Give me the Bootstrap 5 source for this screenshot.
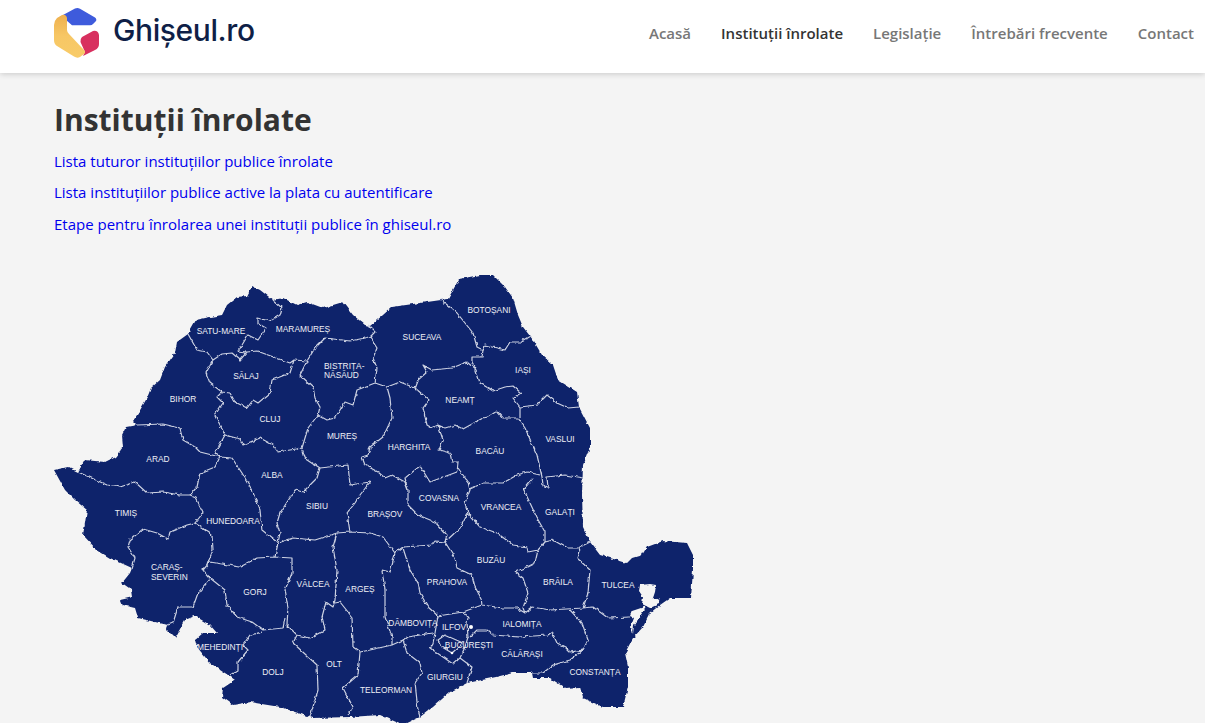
<!DOCTYPE html>
<html lang="ro">
<head>
<meta charset="utf-8">
<title>Ghișeul.ro</title>
<link href="https://cdn.jsdelivr.net/npm/bootstrap@5.3.0/dist/css/bootstrap.min.css" rel="stylesheet">
<style>
html,body{height:723px;overflow:hidden}
body{background:#f4f4f4;font-family:"Open Sans",sans-serif;color:#333}
.top-bar{height:73px;padding:0 11px 0 54px;background:#fff;box-shadow:0 1px 6px rgba(0,0,0,.18);align-items:flex-start}
.brand-box{gap:14px;padding:0;margin:8px 0 0;color:#0f1f47;text-decoration:none}
.brand-text{font-family:Inter,sans-serif;font-weight:500;font-size:30px;line-height:44px;letter-spacing:-.4px;color:#0f1f47;margin-bottom:6px}
.menu-list{gap:30px;margin-top:23px}
.top-bar .menu-list .nav-link{padding:0;font-size:15px;line-height:20px;font-weight:600;color:#777}
.top-bar .menu-list .nav-link.active{color:#333}
.page-body{padding:29px 54px 0}
.page-title{font-size:30px;font-weight:700;line-height:36px;margin:0 0 12.7px;color:#333}
.doc-link{display:block;font-size:15px;line-height:21px;margin-bottom:10.5px;color:#0000ee;text-decoration:none}
.map-wrap{display:block;margin-top:40.300px}
.map-label{font-family:"Liberation Sans",sans-serif;font-size:8.4px;fill:#eef0f6;text-anchor:middle}
.map-label.start{text-anchor:start}
</style>
</head>
<body>
<nav class="navbar navbar-expand top-bar">
  <a class="navbar-brand d-flex align-items-center brand-box" href="#">
    <svg width="45" height="50" viewBox="54 8 45 50" aria-hidden="true">
      <defs><linearGradient id="goldFill" x1="0" y1="0" x2="0" y2="1"><stop offset="0" stop-color="#eeb04e"/><stop offset=".5" stop-color="#f7c765"/><stop offset="1" stop-color="#f8cb68"/></linearGradient></defs>
      <path d="M82 37 93 31Q98 30 99 35V44Q99 48 95 50L83 56 85 52 80.500 42Q80 39 82 37Z" fill="#d8305f"/>
      <path d="M63 15 75 8.500Q77.500 7.500 80 8.700L95 17.500Q97 19 96 21L93 24Q92 25.300 90 25.300H72L66 20Z" fill="#3e5bdc"/>
      <path d="M54 25Q54 21 57 18L62 15Q66 14 67 18V30Q67 32 69 34L84 50Q86 52 84 54L80 57Q77 58.500 74 56.500L57 46Q54 44 54 40Z" fill="url(#goldFill)"/>
    </svg>
    <span class="brand-text">Ghișeul.ro</span>
  </a>
  <ul class="navbar-nav ms-auto menu-list">
    <li class="nav-item"><a class="nav-link" href="#">Acasă</a></li>
    <li class="nav-item"><a class="nav-link active" href="#">Instituții înrolate</a></li>
    <li class="nav-item"><a class="nav-link" href="#">Legislație</a></li>
    <li class="nav-item"><a class="nav-link" href="#">Întrebări frecvente</a></li>
    <li class="nav-item"><a class="nav-link" href="#">Contact</a></li>
  </ul>
</nav>
<main class="page-body">
  <h1 class="page-title">Instituții înrolate</h1>
  <a class="doc-link" href="#">Lista tuturor instituţiilor publice înrolate</a>
  <a class="doc-link" href="#">Lista instituţiilor publice active la plata cu autentificare</a>
  <a class="doc-link" href="#">Etape pentru înrolarea unei instituții publice în ghiseul.ro</a>
  <svg class="map-wrap" width="640" height="448" viewBox="54 275 640 448" role="img" aria-label="Harta României">
    <defs>
      <filter id="rough" filterUnits="userSpaceOnUse" x="40" y="260" width="670" height="480" color-interpolation-filters="sRGB">
        <feTurbulence type="fractalNoise" baseFrequency="0.2" numOctaves="2" seed="4"/>
        <feDisplacementMap in="SourceGraphic" scale="3.5" xChannelSelector="R" yChannelSelector="G"/>
        <feGaussianBlur stdDeviation="0.3"/>
      </filter>
    </defs>
    <g filter="url(#rough)">
      <path fill="#0e236b" d="M54 470 68 467 78 472 85 460 105 462 115 457 123 447 122 435 126 427 137 425 133 421 139 412 147 398 151 388 160 380 165 367 175 353 177 342 188 334 196 320 210 317 222 315 227 305 237 297 247 296 252 286 260 290 273 300 283 298 297 305 307 302 323 308 343 302 353 315 365 325 370 326 383 315 392 307 427 302 448 299 453 290 459 279 480 275 493 275 505 287 513 298 518 315 523 327 533 340 542 355 553 365 558 380 577 392 579 407 590 428 590 447 583 465 582 495 583 527 590 542 600 555 627 563 632 558 642 555 647 547 663 541 687 543 693 555 693 570 691 598 670 598 660 605 650 613 643 627 633 638 625 653 628 667 628 687 623 707 603 707 583 698 580 687 565 688 550 678 533 678 532 673 513 673 497 677 467 683 450 692 433 707 420 717 403 725 387 718 380 715 350 717 313 718 280 707 250 702 233 705 222 697 223 688 235 680 228 675 210 663 197 647 195 640 203 633 217 633 210 625 195 616 185 620 175 638 167 630 168 625 138 618 135 608 122 605 120 600 133 597 132 590 122 583 130 573 132 568 110 558 97 550 83 535 85 523 87 510 75 500 65 490Z"/>
      <path fill="#f4f4f4" d="M640 585 650 584 656 585 655 592 653 598 660 600 659 604 650 608 642 604 643 597 639 591ZM632 611 647 606 640 616 634 625 633 634 631 626 634 618 630 616Z"/>
      <path fill="none" stroke="#ccd1e2" stroke-width="1.200" stroke-linejoin="round" d="M273 300 282 308 280 315 270 321 257 318 257 323 266 328 258 340 248 335 242 345 238 351 247 352 257 351 290 363 294 360 307 361
      M188 334 197 350 207 352 213 360 222 354 232 353 240 360 247 352
      M213 360 206 373 210 383 222 392 230 393 235 402 247 408 253 400 258 403 270 393 272 380 290 373 294 360
      M222 392 217 397 223 403 215 415 225 435 240 439 243 445 260 438 273 445 278 452 302 448
      M225 435 215 453 220 457
      M137 425 163 424 180 428 183 440 195 447 200 452 220 457 215 467 200 473 197 487 190 495
      M78 472 107 485 120 487 135 482 147 493 163 492 180 495 190 495 195 497 203 513 195 523
      M220 457 232 458 242 473 252 490 260 510 262 530 278 543
      M302 448 305 458 320 468 317 478 303 492 295 490 280 513 277 523 280 533 278 543
      M318 415 308 428 302 448
      M307 361 300 375 313 387 315 398 320 407 318 415 327 420 335 418 345 402 353 405 357 390 375 383
      M307 361 315 348 325 338 350 341 370 337 375 332 368 325
      M370 337 377 348 373 358 377 368 375 383
      M320 468 348 465 350 485 370 482 360 495 355 503 347 513 350 532
      M440 299 457 313 473 333 477 347 483 350 485 345 505 350 510 342 520 342 530 336
      M483 350 482 357 472 357 472 363 476 370 480 383 493 391 505 387 513 386 521 393 513 398 520 407 520 418
      M476 370 467 362 452 368 432 370 423 365 427 372 418 380 415 388
      M375 383 387 387 400 382 415 388 429 400 423 408 427 425 432 428 438 425 445 428 455 425 463 429 483 418 488 417 497 411 503 418 518 418 525 428 537 455 542 477 543 485 548 488 547 477 565 475 583 478
      M520 407 537 405 547 395 557 403 568 408 579 407
      M387 387 390 398 392 418 383 437 370 447 368 455 362 457 365 465 378 472 385 478 392 475 405 482 408 490 408 505 418 515 435 522 447 535 445 542
      M438 425 443 440 439 450 450 453 452 462 458 462 457 472 430 482 420 466 405 478 408 490
      M458 468 468 482 470 490 465 503 468 513 460 528 445 542
      M470 489 483 483 503 483 517 475 527 472 540 475 M523 490 533 478 M523 488 537 518 545 532 545 542 538 550 528 552
      M468 513 480 527 497 533 513 545 527 547 528 552
      M538 550 535 563 525 568 515 572 523 578 528 593 523 608 525 613
      M545 542 553 540 567 548 578 548 590 542
      M580 548 577 558 590 570 588 593 583 608 593 607 608 618 630 617
      M482 605 503 608 517 608 525 613 533 607 550 610 583 608
      M570 610 582 623 588 640 583 650 570 660 553 665 543 673 532 673
      M470 637 477 630 487 630 493 635 520 637 548 635 552 632 557 643 565 647 570 652 583 650
      M482 605 463 612 438 616 435 633 433 643 430 648 453 664 460 658 465 647 468 637 467 623 468 618 463 612
      M438 640 445 635 463 643 452 653 442 647Z
      M460 658 472 667 467 683
      M433 633 407 637 403 640 407 653 420 663 422 673 415 683 418 710 420 717
      M403 640 392 645 370 650 360 652 358 675 343 688 353 707 348 715
      M395 553 403 547 432 545 435 541 445 542 455 558 457 568 472 575 475 587 481 598 482 605
      M403 548 410 570 418 583 420 593 428 607 438 616
      M395 553 390 572 382 570 385 590 385 617 392 637 392 645
      M350 532 370 533 383 537 395 553
      M278 543 293 538 315 540 337 533 350 532
      M337 533 333 547 337 570 335 600 333 607 326 602 322 617 325 630 310 638 297 635 287 625 288 607 285 590 292 573 292 558 275 557 278 543
      M335 603 340 602 352 617 353 647 360 652
      M297 635 293 643 317 665 318 690 310 717
      M275 557 257 558 240 567 210 562 203 570 210 578 225 590 227 605 237 617 252 622 263 630 283 628 285 618
      M195 523 212 535 213 550 207 565
      M195 523 187 525 170 532 168 539 157 533 143 529 130 540 128 547 135 558 132 568
      M210 578 198 593 193 607 178 607 173 623 168 625
      M263 632 250 635 243 645 248 650 238 662 238 670 230 675"/>
    </g>
    <circle cx="471" cy="627" r="2" fill="#fff"/>
    <circle cx="452" cy="653" r="1.300" fill="#fff"/>
    <g class="map-names">
      <text class="map-label" x="221" y="334">SATU-MARE</text>
      <text class="map-label" x="303" y="332">MARAMUREȘ</text>
      <text class="map-label start" x="324" y="369">BISTRIȚA-</text>
      <text class="map-label start" x="324" y="378">NĂSĂUD</text>
      <text class="map-label" x="246" y="379">SĂLAJ</text>
      <text class="map-label" x="183" y="402">BIHOR</text>
      <text class="map-label" x="270" y="422">CLUJ</text>
      <text class="map-label" x="342" y="439">MUREȘ</text>
      <text class="map-label" x="158" y="462">ARAD</text>
      <text class="map-label" x="272" y="478">ALBA</text>
      <text class="map-label" x="422" y="340">SUCEAVA</text>
      <text class="map-label" x="489" y="313">BOTOȘANI</text>
      <text class="map-label" x="523" y="373">IAȘI</text>
      <text class="map-label" x="460" y="403">NEAMȚ</text>
      <text class="map-label" x="409" y="450">HARGHITA</text>
      <text class="map-label" x="490" y="454">BACĂU</text>
      <text class="map-label" x="560" y="442">VASLUI</text>
      <text class="map-label" x="126" y="516">TIMIȘ</text>
      <text class="map-label" x="233" y="524">HUNEDOARA</text>
      <text class="map-label" x="317" y="509">SIBIU</text>
      <text class="map-label" x="385" y="517">BRAȘOV</text>
      <text class="map-label" x="439" y="501">COVASNA</text>
      <text class="map-label" x="501" y="510">VRANCEA</text>
      <text class="map-label" x="560" y="515">GALAȚI</text>
      <text class="map-label start" x="151" y="570">CARAȘ-</text>
      <text class="map-label start" x="151" y="580">SEVERIN</text>
      <text class="map-label" x="255" y="595">GORJ</text>
      <text class="map-label" x="313" y="587">VÂLCEA</text>
      <text class="map-label" x="360" y="592">ARGEȘ</text>
      <text class="map-label" x="447" y="585">PRAHOVA</text>
      <text class="map-label" x="491" y="563">BUZĂU</text>
      <text class="map-label" x="558" y="585">BRĂILA</text>
      <text class="map-label" x="618" y="588">TULCEA</text>
      <text class="map-label" x="413" y="626">DÂMBOVIȚA</text>
      <text class="map-label" x="454" y="630">ILFOV</text>
      <text class="map-label" x="522" y="627">IALOMIȚA</text>
      <text class="map-label" x="469" y="648">BUCUREȘTI</text>
      <text class="map-label" x="522" y="657">CĂLĂRAȘI</text>
      <text class="map-label" x="595" y="675">CONSTANȚA</text>
      <text class="map-label" x="445" y="680">GIURGIU</text>
      <text class="map-label" x="386" y="693">TELEORMAN</text>
      <text class="map-label" x="220" y="650">MEHEDINȚI</text>
      <text class="map-label" x="273" y="675">DOLJ</text>
      <text class="map-label" x="334" y="667">OLT</text>
    </g>
  </svg>
</main>
<script src="https://cdn.jsdelivr.net/npm/bootstrap@5.3.0/dist/js/bootstrap.bundle.min.js"></script>
</body>
</html>
